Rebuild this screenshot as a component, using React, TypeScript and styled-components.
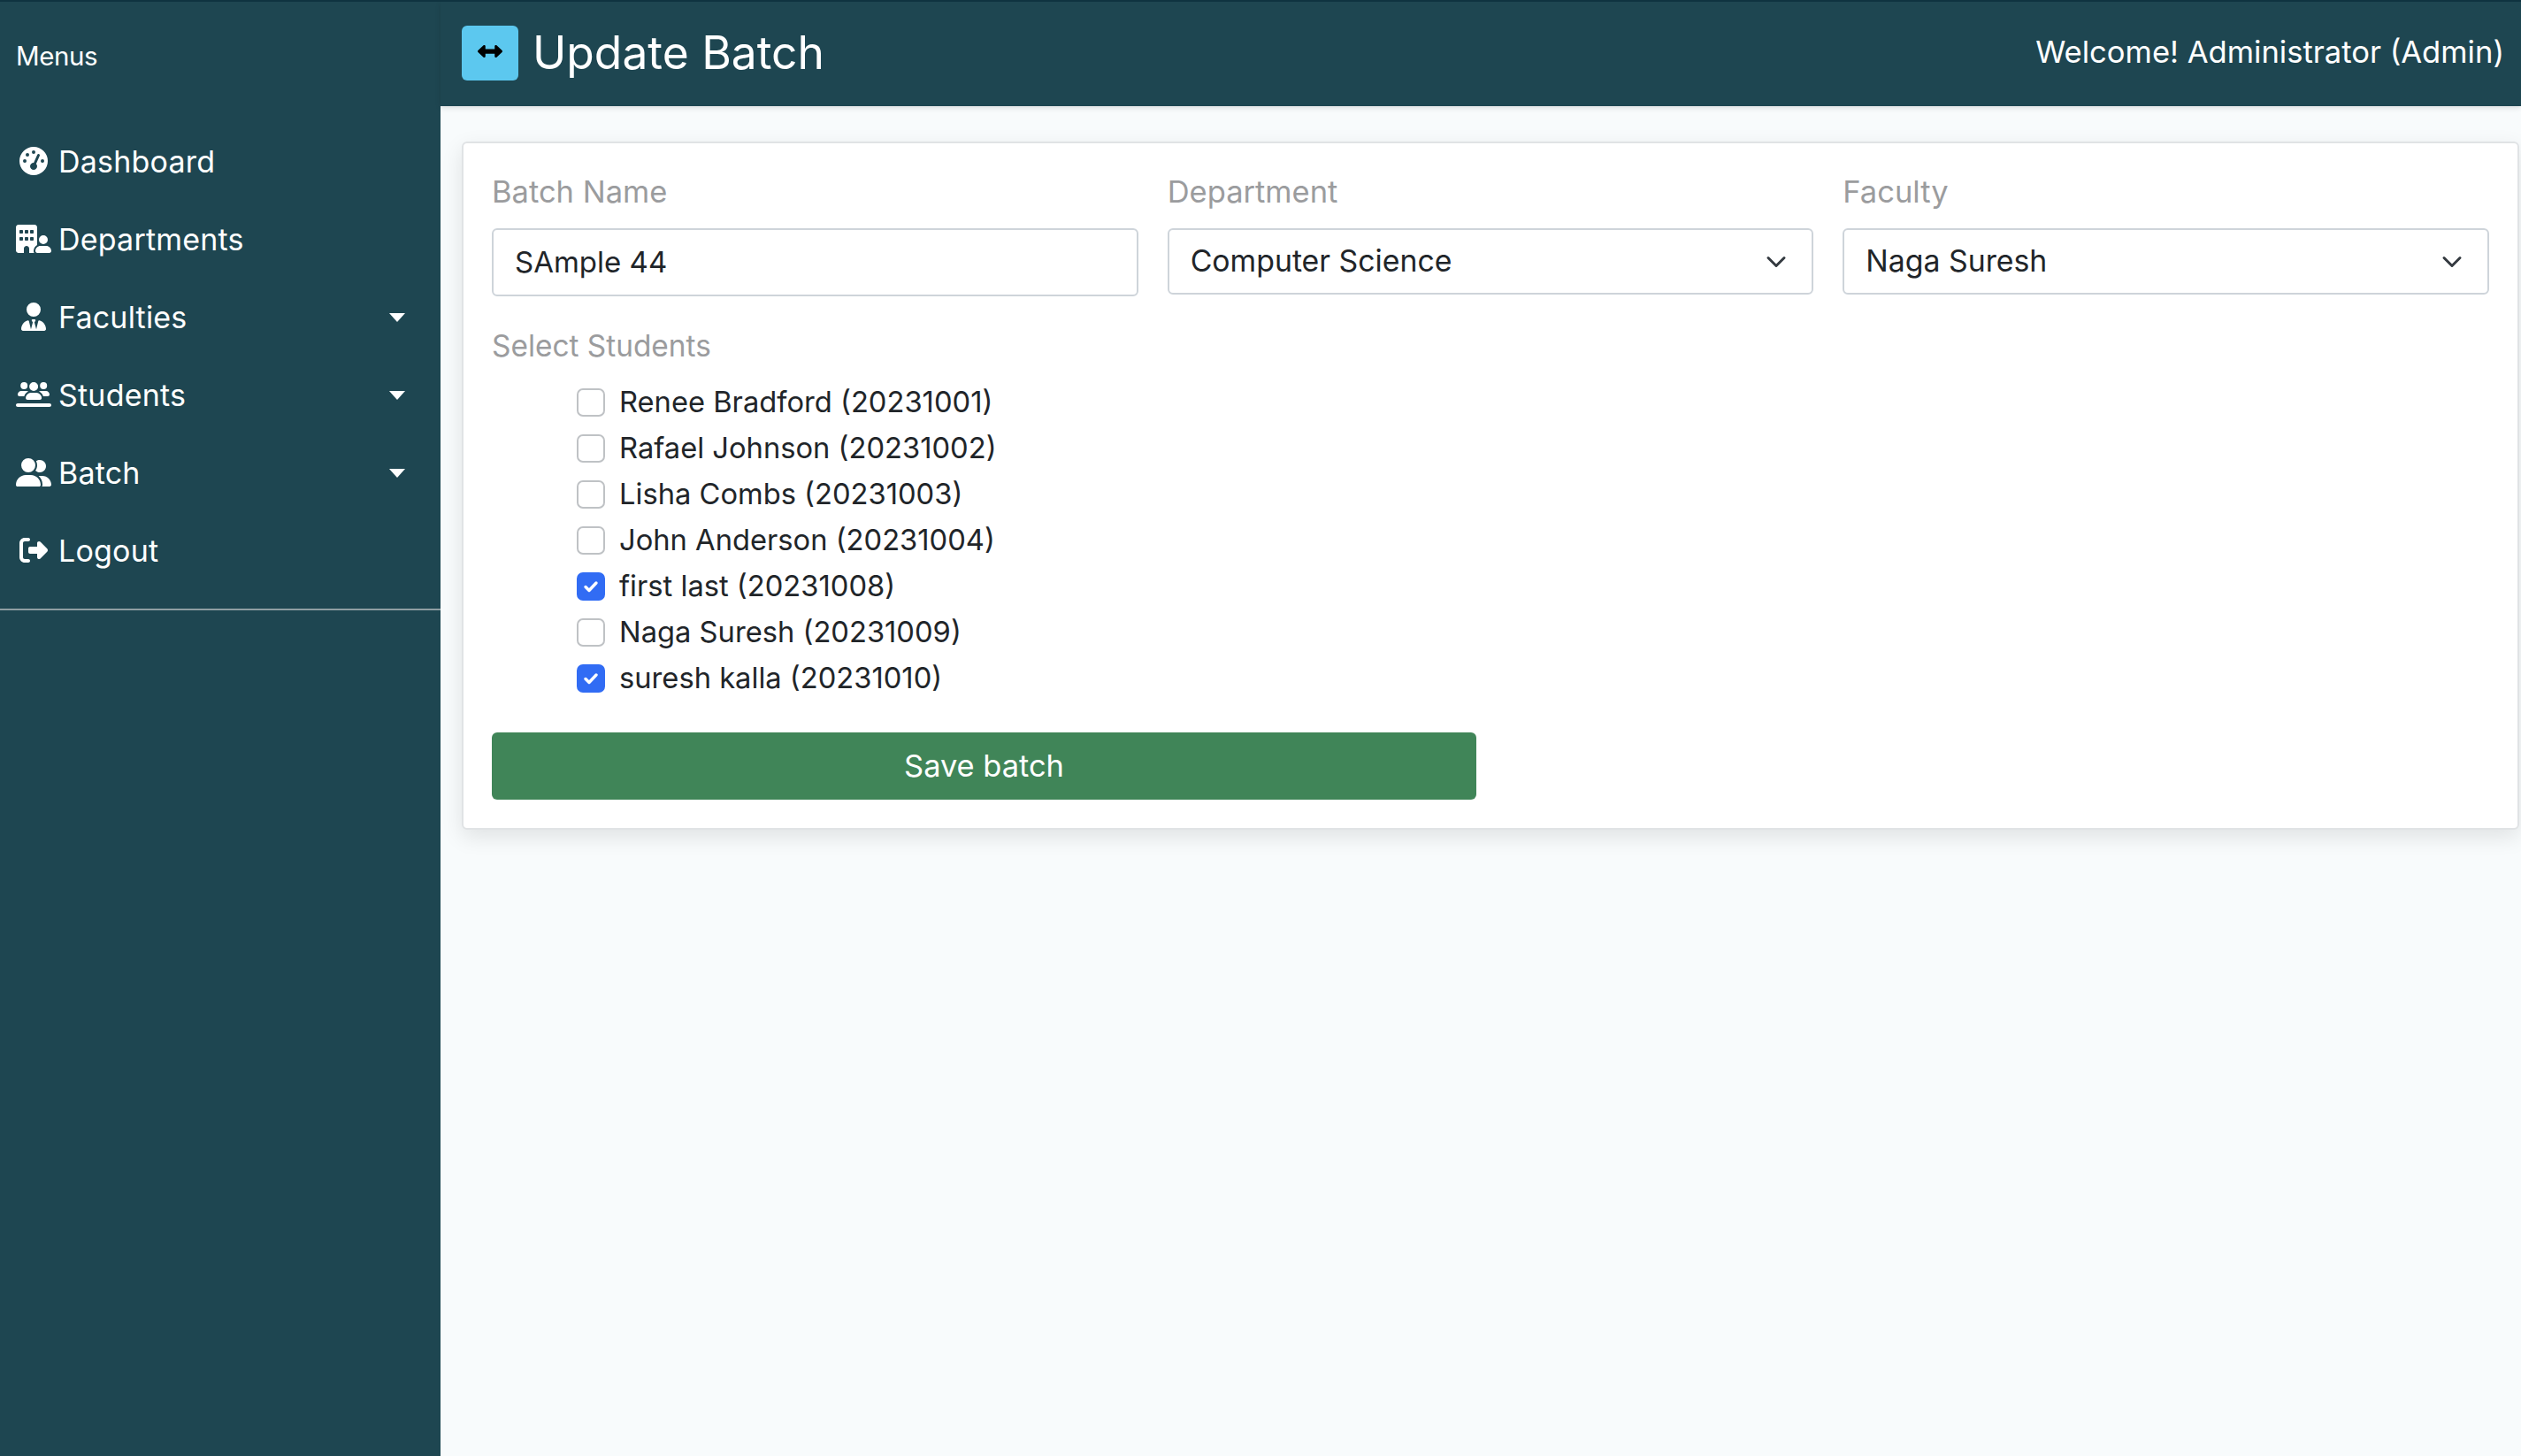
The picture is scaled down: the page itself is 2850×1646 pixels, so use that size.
import React from "react";
import styled, { createGlobalStyle } from "styled-components";
import { FaBuildingUser, FaGaugeHigh, FaLeftRight, FaRightFromBracket, FaUserGroup, FaUsersLine, FaUserTie } from "react-icons/fa6";

const GlobalStyle = createGlobalStyle`
	html, body {
		margin: 0;
		padding: 0;
		background: #f8fbfc;
	}

	body {
		font-family: Inter, "Noto Sans", sans-serif;
		-webkit-font-smoothing: antialiased;
	}

	* {
		box-sizing: border-box;
	}
`;

const Shell = styled.div`
	display: flex;
	height: 1646px;
	overflow: hidden;
	border-top: 2px solid #0f3340;
`;

const Sidebar = styled.aside`
	flex: 0 0 498px;
	background: #1e4651;
	color: #fff;
`;

const SidebarHeading = styled.div`
	height: 122px;
	padding: 0 18px;
	display: flex;
	align-items: center;
	font-size: 29.5px;
	letter-spacing: -0.4px;
`;

const NavList = styled.nav`
	padding-top: 14px;
	padding-bottom: 22px;
	border-bottom: 2px solid #8f9ea3;
`;

const NavItem = styled.a`
	height: 88px;
	display: flex;
	align-items: center;
	color: #fff;
	font-size: 34px;
	letter-spacing: 0.2px;
	padding: 0 40px 0 18px;
`;

const NavIcon = styled.span<{ $wide?: boolean }>`
	flex: 0 0 40px;
	margin-right: 8px;
	display: flex;
	align-items: center;
	justify-content: center;

	svg {
		height: 32px;
		width: ${(p) => (p.$wide ? "40px" : "32px")};
	}
`;

const NavLabel = styled.span`
	flex: 1;
`;

const Caret = styled.span`
	width: 0;
	height: 0;
	margin-top: 2px;
	border-left: 9px solid transparent;
	border-right: 9px solid transparent;
	border-top: 10px solid #fff;
`;

const Main = styled.main`
	flex: 1;
	min-width: 0;
	display: flex;
	flex-direction: column;
`;

const TopBar = styled.header`
	height: 118px;
	flex: none;
	background: #1e4651;
	color: #fff;
	display: flex;
	align-items: center;
	justify-content: space-between;
	padding: 0 19px 0 24px;
	box-shadow: 0 2px 6px rgba(0, 0, 0, 0.12);
	position: relative;
`;

const TitleGroup = styled.div`
	display: flex;
	align-items: center;
	gap: 16px;
	margin-bottom: 2px;
`;

const TitleIcon = styled.span`
	width: 64px;
	height: 62px;
	border-radius: 6px;
	background: #5cc8ef;
	color: #000;
	display: flex;
	align-items: center;
	justify-content: center;
	padding-bottom: 4px;
	font-size: 28px;
`;

const Title = styled.h1`
	margin: 0 0 3px;
	font-size: 51.5px;
	font-weight: 400;
`;

const Welcome = styled.div`
	font-size: 34.6px;
	margin-bottom: 6px;
`;

const Content = styled.div`
	padding: 40px 2px 0 24px;
`;

const Card = styled.form`
	height: 778px;
	background: #fff;
	border: 2px solid #e0e3e5;
	border-radius: 6px;
	padding: 33px 32px 0;
	box-shadow: 0 8px 24px rgba(0, 0, 0, 0.1);
`;

const FieldGrid = styled.div`
	display: grid;
	grid-template-columns: repeat(3, 1fr);
	gap: 33px;
`;

const Field = styled.div`
	display: flex;
	flex-direction: column;
`;

const FieldLabel = styled.label`
	display: block;
	color: #9b9c9e;
	font-size: 34.5px;
	line-height: 44px;
	margin-bottom: 19px;
`;

const TextInput = styled.input`
	height: 77px;
	border: 2px solid #ced4da;
	border-radius: 6px;
	padding: 0 24px 2px;
	color: #212529;
	background: #fff;
	font: inherit;
	font-size: 33px;
`;

const SelectWrap = styled.div`
	position: relative;
`;

const Select = styled.select`
	display: block;
	width: 100%;
	height: 75px;
	appearance: none;
	border: 2px solid #ced4da;
	border-radius: 6px;
	padding: 0 24px 2px;
	color: #212529;
	background: #fff;
	font: inherit;
	font-size: 33.8px;
`;

const Chevron = styled.svg`
	position: absolute;
	right: 30px;
	top: 26px;
	width: 24px;
	height: 24px;
	pointer-events: none;
`;

const StudentsLabel = styled(FieldLabel)`
	font-size: 33.4px;
	margin: 34px 0 15px;
`;

const StudentList = styled.div`
	padding-left: 96px;
	display: flex;
	flex-direction: column;
`;

const StudentRow = styled.label`
	height: 52px;
	display: flex;
	align-items: center;
	gap: 16px;
	color: #212529;
	font-size: 32.7px;
`;

const CheckBox = styled.span<{ $checked?: boolean }>`
	width: 32px;
	height: 32px;
	margin-top: 2px;
	flex: none;
	border-radius: 7px;
	border: 2px solid ${(p) => (p.$checked ? "#316cf4" : "#bfc2c5")};
	background: ${(p) => (p.$checked ? "#316cf4" : "#fff")};
	display: flex;
	align-items: center;
	justify-content: center;
`;

const SaveButton = styled.button`
	display: block;
	width: 1113px;
	height: 76px;
	margin-top: 36px;
	padding-bottom: 3px;
	border: 0;
	border-radius: 6px;
	background: #408558;
	color: #fff;
	font: inherit;
	font-size: 34.4px;
`;

const navItems = [
	{ label: "Dashboard", icon: <FaGaugeHigh /> },
	{ label: "Departments", icon: <FaBuildingUser />, wide: true },
	{ label: "Faculties", icon: <FaUserTie />, caret: true },
	{ label: "Students", icon: <FaUsersLine />, wide: true, caret: true },
	{ label: "Batch", icon: <FaUserGroup />, wide: true, caret: true },
	{ label: "Logout", icon: <FaRightFromBracket /> },
];

const students = [
	{ name: "Renee Bradford (20231001)" },
	{ name: "Rafael Johnson (20231002)" },
	{ name: "Lisha Combs (20231003)" },
	{ name: "John Anderson (20231004)" },
	{ name: "first last (20231008)", checked: true },
	{ name: "Naga Suresh (20231009)" },
	{ name: "suresh kalla (20231010)", checked: true },
];

const ChevronIcon = () => (
	<Chevron viewBox="0 0 16 16" fill="none">
		<path d="M2 5l6 6 6-6" stroke="#343a40" strokeWidth="2" strokeLinecap="round" strokeLinejoin="round" />
	</Chevron>
);

const App = () => {
	return (
		<Shell>
			<GlobalStyle />
			<Sidebar>
				<SidebarHeading>Menus</SidebarHeading>
				<NavList>
					{navItems.map((item) => (
						<NavItem key={item.label}>
							<NavIcon $wide={item.wide}>{item.icon}</NavIcon>
							<NavLabel>{item.label}</NavLabel>
							{item.caret && <Caret />}
						</NavItem>
					))}
				</NavList>
			</Sidebar>

			<Main>
				<TopBar>
					<TitleGroup>
						<TitleIcon>
							<FaLeftRight />
						</TitleIcon>
						<Title>Update Batch</Title>
					</TitleGroup>
					<Welcome>Welcome! Administrator (Admin)</Welcome>
				</TopBar>

				<Content>
					<Card>
						<FieldGrid>
							<Field>
								<FieldLabel>Batch Name</FieldLabel>
								<TextInput defaultValue="SAmple 44" />
							</Field>
							<Field>
								<FieldLabel>Department</FieldLabel>
								<SelectWrap>
									<Select defaultValue="cs">
										<option value="cs">Computer Science</option>
									</Select>
									<ChevronIcon />
								</SelectWrap>
							</Field>
							<Field>
								<FieldLabel>Faculty</FieldLabel>
								<SelectWrap>
									<Select defaultValue="naga">
										<option value="naga">Naga Suresh</option>
									</Select>
									<ChevronIcon />
								</SelectWrap>
							</Field>
						</FieldGrid>

						<StudentsLabel>Select Students</StudentsLabel>
						<StudentList>
							{students.map((s) => (
								<StudentRow key={s.name}>
									<CheckBox $checked={s.checked}>
										{s.checked && (
											<svg width="20" height="20" viewBox="0 0 20 20" fill="none">
												<path d="M4 10.5l4 4 8-8.5" stroke="#fff" strokeWidth="3.4" strokeLinecap="round" strokeLinejoin="round" />
											</svg>
										)}
									</CheckBox>
									{s.name}
								</StudentRow>
							))}
						</StudentList>

						<SaveButton type="button">Save batch</SaveButton>
					</Card>
				</Content>
			</Main>
		</Shell>
	);
};

export default App;
